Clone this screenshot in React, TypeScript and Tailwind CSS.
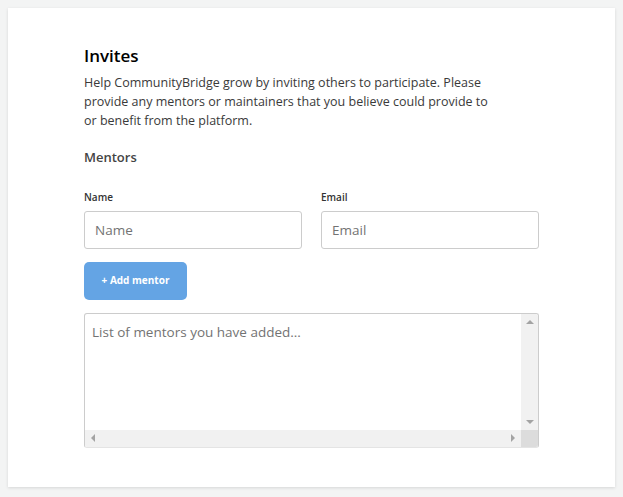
export default function App() {
  return (
    <div className="min-h-screen bg-[#f3f4f4] p-2" style={{ fontFamily: '"Open Sans", sans-serif' }}>
      <div className="h-[479px] bg-white shadow-[0_1px_3px_rgba(0,0,0,0.12)] px-[76px] pt-[37px]">
        <h1 className="text-[17px] font-semibold text-black leading-[22px]">Invites</h1>
        <p className="mt-[6px] text-[12.5px] leading-[19px] text-[#3a3a3a] w-[470px]">
          Help CommunityBridge grow by inviting others to participate. Please
          <br />
          provide any mentors or maintainers that you believe could provide to
          <br />
          or benefit from the platform.
        </p>
        <h2 className="mt-[18px] text-[13px] font-semibold text-[#444]">Mentors</h2>
        <div className="mt-[22px] flex gap-[19px] w-[455px]">
          <div className="flex-1">
            <label className="block text-[10px] font-semibold text-[#333] leading-[14px]">Name</label>
            <input
              placeholder="Name"
              className="mt-[7px] w-full h-[38px] border border-[#ccc] rounded-[3px] px-[10px] text-[13.5px] placeholder:text-[#737373] outline-none"
            />
          </div>
          <div className="flex-1">
            <label className="block text-[10px] font-semibold text-[#333] leading-[14px]">Email</label>
            <input
              placeholder="Email"
              className="mt-[7px] w-full h-[38px] border border-[#ccc] rounded-[3px] px-[10px] text-[13.5px] placeholder:text-[#737373] outline-none"
            />
          </div>
        </div>
        <button className="mt-[13px] w-[103px] h-[38px] bg-[#64a4e4] rounded-[5px] text-white text-[10px] font-bold">
          + Add mentor
        </button>
        {/* textarea with classic scrollbars */}
        <div className="mt-[13px] w-[455px] h-[135px] border border-[#ccc] border-b-[#e4e4e4] rounded-[3px] flex flex-col overflow-hidden">
          <div className="flex flex-1 min-h-0">
            <textarea
              placeholder="List of mentors you have added..."
              className="flex-1 px-[7px] py-[8px] text-[13.5px] placeholder:text-[#737373] resize-none outline-none overflow-hidden"
            />
            <div className="w-[17px] bg-[#f1f1f1] flex flex-col items-center justify-between py-[6px]">
              <div className="w-0 h-0 border-l-[4px] border-r-[4px] border-b-[4px] border-l-transparent border-r-transparent border-b-[#a3a3a3]" />
              <div className="w-0 h-0 border-l-[4px] border-r-[4px] border-t-[4px] border-l-transparent border-r-transparent border-t-[#a3a3a3]" />
            </div>
          </div>
          <div className="flex h-[17px]">
            <div className="flex-1 bg-[#f1f1f1] flex items-center justify-between px-[6px]">
              <div className="w-0 h-0 border-t-[4px] border-b-[4px] border-r-[4px] border-t-transparent border-b-transparent border-r-[#a3a3a3]" />
              <div className="w-0 h-0 border-t-[4px] border-b-[4px] border-l-[4px] border-t-transparent border-b-transparent border-l-[#a3a3a3]" />
            </div>
            <div className="w-[17px] bg-[#dcdcdc]" />
          </div>
        </div>
      </div>
    </div>
  );
}
